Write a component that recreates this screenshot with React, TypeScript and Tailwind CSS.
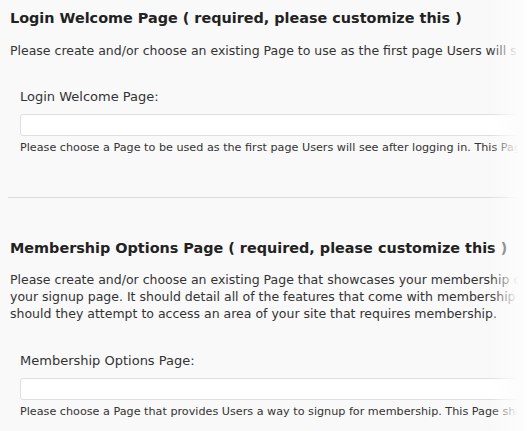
import React from "react";

const font = { fontFamily: '"DejaVu Sans", Verdana, sans-serif' };

function Field({ label, help }: { label: string; help: string }) {
  return (
    <div className="pl-[20px]">
      <div className="text-[13px] leading-[17px] text-[#333] whitespace-nowrap">{label}</div>
      <div className="mt-[9px] h-[22px] w-[620px] rounded-[3px] border border-[#dfdfdf] bg-white" />
      <div className="mt-[5px] text-[11.2px] leading-[14px] text-[#333] whitespace-nowrap">{help}</div>
    </div>
  );
}

export default function App() {
  return (
    <div className="relative w-[530px] h-[431px] overflow-hidden bg-[#f9f9f9]" style={font}>
      <div className="w-[700px] pt-[8px]">
        <h3 className="pl-[10px] text-[14.4px] leading-[20px] font-bold text-[#222] whitespace-nowrap">
          Login Welcome Page ( required, please customize this )
        </h3>
        <p className="mt-[14px] pl-[10px] text-[12.5px] leading-[17px] text-[#333] whitespace-nowrap">
          Please create and/or choose an existing Page to use as the first page Users will see after logging in.
        </p>
        <div className="mt-[29px]">
          <Field
            label="Login Welcome Page:"
            help="Please choose a Page to be used as the first page Users will see after logging in. This Page should be public."
          />
        </div>
        <div className="mt-[42px] ml-[8px] h-px bg-[#dcdcdc]" />
        <h3 className="mt-[40px] pl-[10px] text-[14.4px] leading-[20px] font-bold text-[#222] whitespace-nowrap">
          Membership Options Page ( required, please customize this )
        </h3>
        <div className="mt-[13px] pl-[10px] text-[12.5px] leading-[17px] text-[#333] whitespace-nowrap">
          <div>Please create and/or choose an existing Page that showcases your membership options.</div>
          <div>your signup page. It should detail all of the features that come with membership to</div>
          <div>should they attempt to access an area of your site that requires membership.</div>
        </div>
        <div className="mt-[30px]">
          <Field
            label="Membership Options Page:"
            help="Please choose a Page that provides Users a way to signup for membership. This Page should be public."
          />
        </div>
      </div>
      <div className="pointer-events-none absolute top-0 right-0 h-full w-[40px] bg-gradient-to-r from-[#f9f9f900] via-[#fcfcfc] via-70% to-white" />
    </div>
  );
}
